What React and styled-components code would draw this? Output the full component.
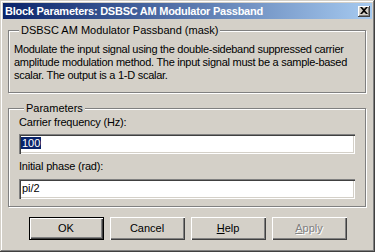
import React from "react";
import styled, { createGlobalStyle } from "styled-components";

const GlobalStyle = createGlobalStyle`
  html, body {
    margin: 0;
    padding: 0;
    background: #d4d0c8;
  }
  body {
    font-family: "Liberation Sans", Arial, sans-serif;
    font-size: 11px;
    color: #000;
  }
`;

const Window = styled.div`
  width: 375px;
  height: 252px;
  box-sizing: border-box;
  padding: 3px;
  background: #d4d0c8;
  box-shadow: inset -1px -1px 0 #404040, inset 1px 1px 0 #d4d0c8,
    inset -2px -2px 0 #808080, inset 2px 2px 0 #fff;
  display: flex;
  flex-direction: column;
`;

const TitleBar = styled.div`
  height: 16px;
  display: flex;
  align-items: center;
  justify-content: space-between;
  padding: 0 2px;
  background: linear-gradient(to right, #0a246a, #a6caf0);
`;

const Title = styled.div`
  color: #fff;
  font-weight: bold;
  font-size: 11px;
  line-height: 13px;
  letter-spacing: -0.25px;
  white-space: nowrap;
`;

const CloseButton = styled.div`
  width: 12px;
  height: 11px;
  box-sizing: border-box;
  background: #d4d0c8;
  box-shadow: inset -1px -1px 0 #404040, inset 1px 1px 0 #fff,
    inset -2px -2px 0 #808080;
  display: flex;
  align-items: center;
  justify-content: center;
  padding-bottom: 1px;
`;

const Body = styled.div`
  flex: 1;
  display: flex;
  flex-direction: column;
  padding: 5px 5px 0;
`;

const Group = styled.fieldset`
  margin: ${(p) => p.$top || 0}px 0 0;
  padding: ${(p) => p.$pad};
  min-inline-size: 0;
  border: 1px solid #808080;
  box-shadow: 1px 1px 0 #fff, inset 1px 1px 0 #fff;
  margin-right: 1px;
`;

const Legend = styled.legend`
  margin-left: 5px;
  padding: 0 2px;
  line-height: 13px;
  background: #d4d0c8;
`;

const Description = styled.p`
  margin: 0;
  line-height: 13px;
  letter-spacing: -0.27px;
`;

const FieldLabel = styled.div`
  line-height: 13px;
  letter-spacing: -0.2px;
  margin-bottom: ${(p) => p.$gap}px;
`;

const Field = styled.div`
  height: 20px;
  box-sizing: border-box;
  background: #fff;
  padding: 2px 3px 0;
  line-height: 14px;
  box-shadow: inset 1px 1px 0 #808080, inset 2px 2px 0 #404040,
    inset -1px -1px 0 #fff, inset -2px -2px 0 #d4d0c8;
  margin-bottom: ${(p) => p.$gap || 0}px;
`;

const Selected = styled.span`
  background: #0a246a;
  color: #fff;
  margin-left: -1px;
  padding: 0 1px;
`;

const ButtonRow = styled.div`
  display: flex;
  justify-content: center;
  gap: 6px;
  margin-top: 10px;
`;

const Button = styled.div`
  width: 75px;
  height: 23px;
  box-sizing: border-box;
  display: flex;
  align-items: center;
  justify-content: center;
  border: ${(p) => (p.$default ? "1px solid #000" : "none")};
  box-shadow: inset 1px 1px 0 #fff, inset -1px -1px 0 #404040,
    inset -2px -2px 0 #808080;
  color: ${(p) => (p.$disabled ? "#808080" : "#000")};
  text-shadow: ${(p) => (p.$disabled ? "1px 1px 0 #fff" : "none")};
  line-height: 13px;
`;

const Key = styled.span`
  text-decoration: underline;
`;

export default function App() {
  return (
    <>
      <GlobalStyle />
      <Window>
        <TitleBar>
          <Title>Block Parameters: DSBSC AM Modulator Passband</Title>
          <CloseButton>
            <svg width="8" height="7" viewBox="0 0 8 7">
              <path d="M0 0h2l2 2 2-2h2L5 3.5 8 7H6L4 5 2 7H0l3-3.5z" fill="#000" />
            </svg>
          </CloseButton>
        </TitleBar>
        <Body>
          <Group $pad="6px 5px 10px">
            <Legend>DSBSC AM Modulator Passband (mask)</Legend>
            <Description>
              Modulate the input signal using the double-sideband suppressed carrier
              amplitude modulation method. The input signal must be a sample-based
              scalar. The output is a 1-D scalar.
            </Description>
          </Group>
          <Group $top={9} $pad="1px 10px 7px">
            <Legend>Parameters</Legend>
            <FieldLabel $gap={5}>Carrier frequency (Hz):</FieldLabel>
            <Field $gap={6}>
              <Selected>100</Selected>
            </Field>
            <FieldLabel $gap={6}>Initial phase (rad):</FieldLabel>
            <Field>pi/2</Field>
          </Group>
          <ButtonRow>
            <Button $default>OK</Button>
            <Button>Cancel</Button>
            <Button>
              <span>
                <Key>H</Key>elp
              </span>
            </Button>
            <Button $disabled>
              <span>
                <Key>A</Key>pply
              </span>
            </Button>
          </ButtonRow>
        </Body>
      </Window>
    </>
  );
}
